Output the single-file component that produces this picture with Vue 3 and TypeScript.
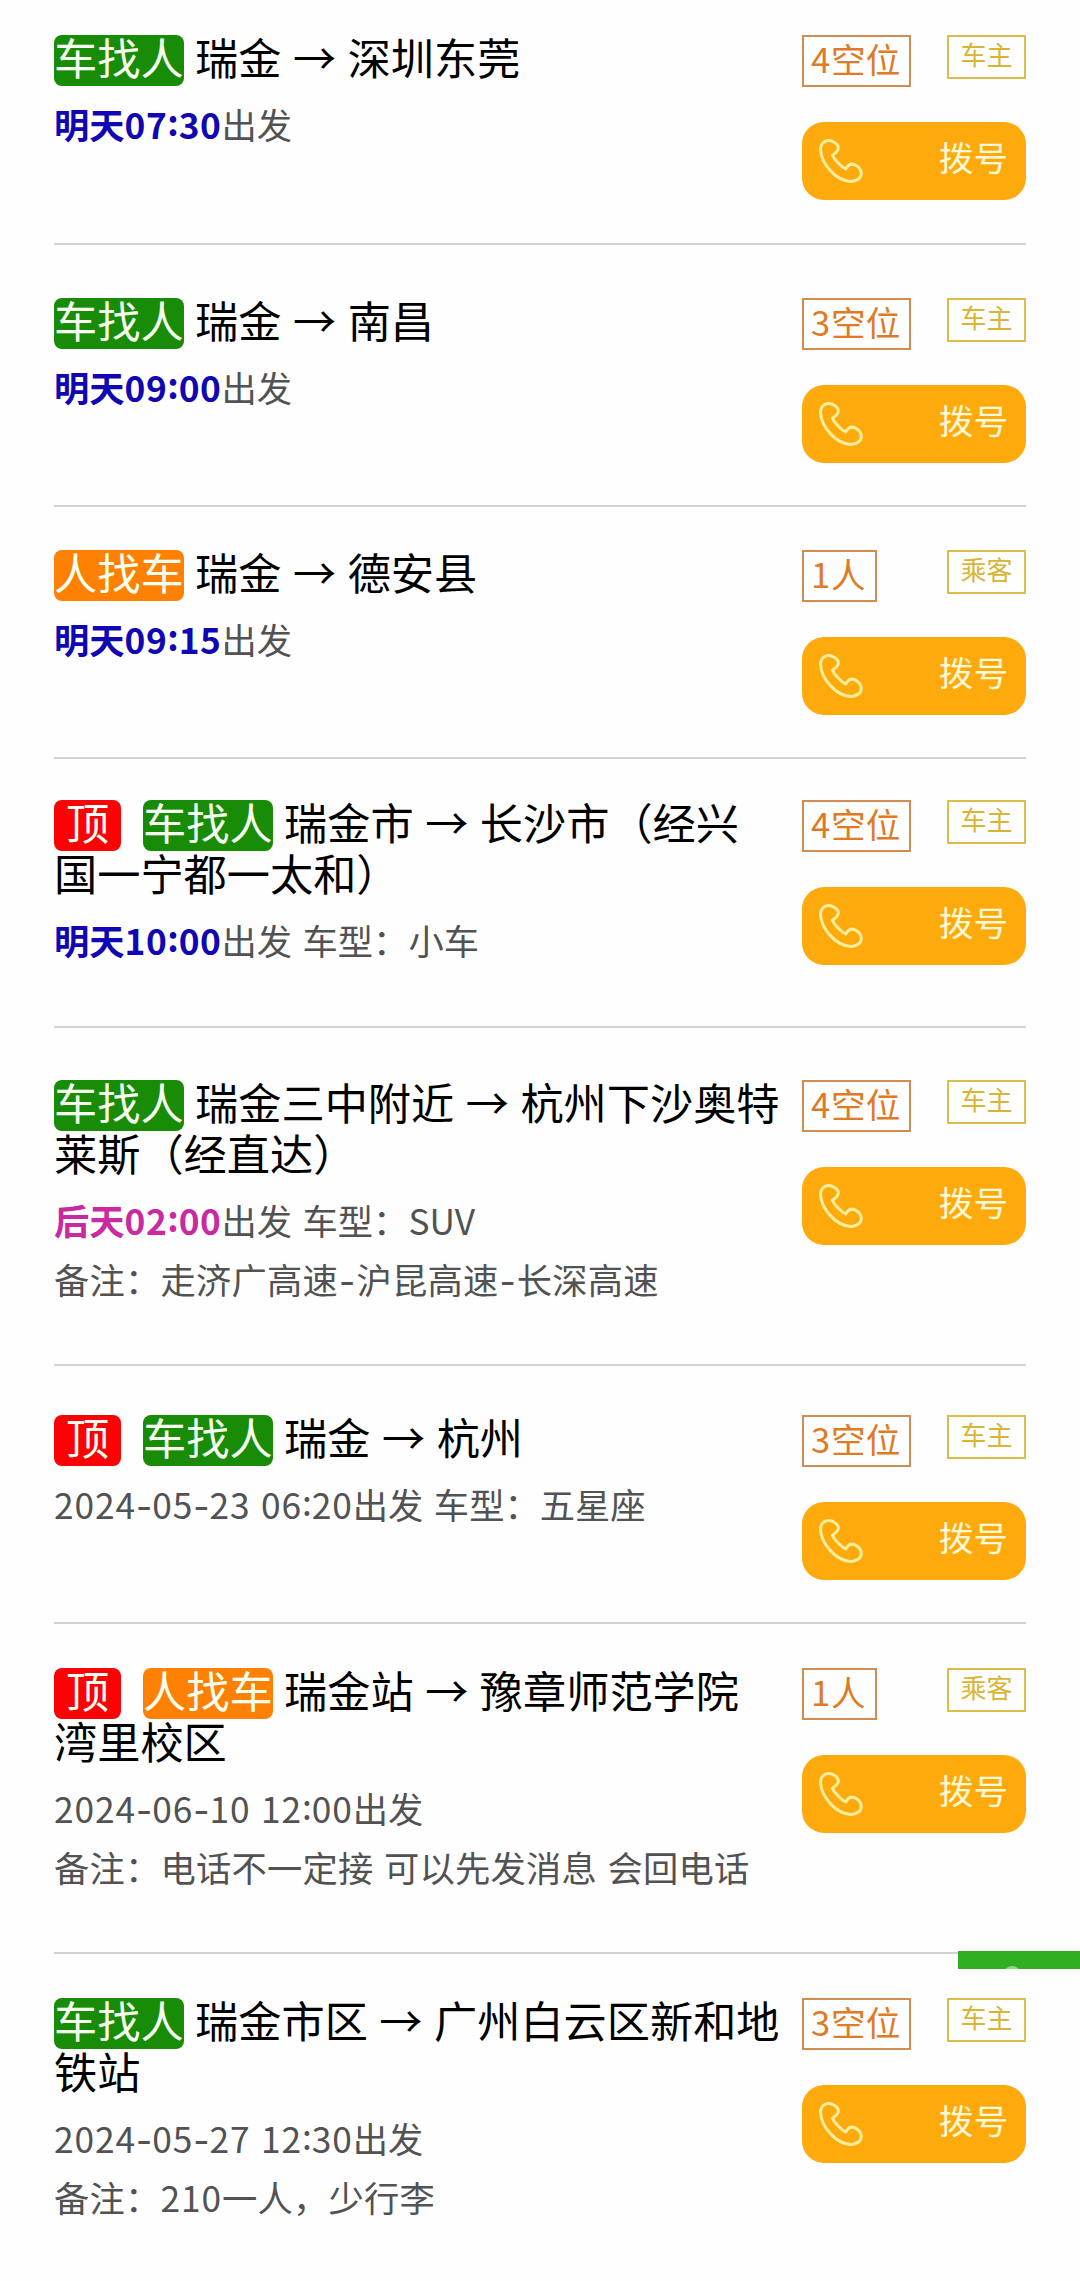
<script setup lang="ts">
type Kind = 'car' | 'rider'

interface Trip {
  kind: Kind
  pinned?: boolean
  lines: string[]
  day?: string
  dayTone?: 'blue' | 'pink'
  meta: string
  note?: string
  seats: string
  gap: number
  height: number
}

interface Piece {
  text: string
  cls: string
}

const trips: Trip[] = [
  { kind: 'car', lines: ['瑞金 → 深圳东莞'], day: '明天07:30', dayTone: 'blue', meta: '出发', seats: '4空位', gap: 35, height: 245 },
  { kind: 'car', lines: ['瑞金 → 南昌'], day: '明天09:00', dayTone: 'blue', meta: '出发', seats: '3空位', gap: 53, height: 262 },
  { kind: 'rider', lines: ['瑞金 → 德安县'], day: '明天09:15', dayTone: 'blue', meta: '出发', seats: '1人', gap: 43, height: 252 },
  { kind: 'car', pinned: true, lines: ['瑞金市 → 长沙市（经兴', '国一宁都一太和）'], day: '明天10:00', dayTone: 'blue', meta: '出发 车型：小车', seats: '4空位', gap: 41, height: 269 },
  { kind: 'car', lines: ['瑞金三中附近 → 杭州下沙奥特', '莱斯（经直达）'], day: '后天02:00', dayTone: 'pink', meta: '出发 车型：SUV', note: '备注：走济广高速-沪昆高速-长深高速', seats: '4空位', gap: 52, height: 338 },
  { kind: 'car', pinned: true, lines: ['瑞金 → 杭州'], meta: '2024-05-23 06:20出发 车型：五星座', seats: '3空位', gap: 49, height: 258 },
  { kind: 'rider', pinned: true, lines: ['瑞金站 → 豫章师范学院', '湾里校区'], meta: '2024-06-10 12:00出发', note: '备注：电话不一定接 可以先发消息 会回电话', seats: '1人', gap: 44, height: 330 },
  { kind: 'car', lines: ['瑞金市区 → 广州白云区新和地', '铁站'], meta: '2024-05-27 12:30出发', note: '备注：210一人，少行李', seats: '3空位', gap: 44, height: 327 },
]

const kindLabel: Record<Kind, string> = { car: '车找人', rider: '人找车' }
const roleLabel: Record<Kind, string> = { car: '车主', rider: '乘客' }

/* Splits a line so digits, dashes and colons can be spaced on their own. */
function pieces(source: string): Piece[] {
  const parts = source.match(/[0-9]+|-|:| |[^0-9\-: ]+/g) ?? []
  return parts.map((text) => {
    if (/^[0-9]/.test(text)) return { text, cls: 'num' }
    if (text === '-') return { text, cls: 'dash' }
    if (text === ':') return { text, cls: 'colon' }
    if (text === ' ') return { text, cls: 'gap' }
    return { text, cls: '' }
  })
}
</script>

<template>
  <main class="list">
    <article
      v-for="(t, i) in trips"
      :key="i"
      class="trip"
      :style="{ height: t.height + 'px', paddingTop: t.gap + 'px' }"
    >
      <div class="info">
        <h2 class="title">
          <span v-if="t.pinned" class="badge pin">顶</span><span class="badge" :class="t.kind">{{ kindLabel[t.kind] }}</span><template v-for="(line, n) in t.lines" :key="n"><br v-if="n > 0"><span v-for="(p, k) in pieces(line)" :key="k" :class="p.cls">{{ p.text }}</span></template>
        </h2>
        <p class="row"><b v-if="t.day" :class="t.dayTone"><span v-for="(p, k) in pieces(t.day)" :key="k" :class="p.cls">{{ p.text }}</span></b><span v-for="(p, k) in pieces(t.meta)" :key="k" :class="p.cls">{{ p.text }}</span></p>
        <p v-if="t.note" class="row note"><span v-for="(p, k) in pieces(t.note)" :key="k" :class="p.cls">{{ p.text }}</span></p>
      </div>
      <aside class="side">
        <div class="tags">
          <span class="seats"><span v-for="(p, k) in pieces(t.seats)" :key="k" :class="p.cls">{{ p.text }}</span></span>
          <span class="role">{{ roleLabel[t.kind] }}</span>
        </div>
        <button class="call" type="button">
          <svg class="phone" viewBox="0 0 44 44" fill="none" stroke="currentColor" stroke-width="3" stroke-linejoin="round" stroke-linecap="round">
            <path d="M9 1.6C4.300 1.900 1.300 5.700 1.500 10.500C2.300 25.500 17.500 41.800 31.500 42.400C37.500 42.600 42.100 39.300 42.300 34.600C42.400 30.600 39.300 27.400 35.500 25.700C31.500 24 28.600 26.700 26.800 30C22.300 28 15.800 21.200 13.400 16.300C16.300 14.500 19.700 12.200 19.300 8.300C18.900 4.700 13.400 1.300 9 1.600Z" />
          </svg>
          <span>拨号</span>
        </button>
      </aside>
    </article>
    <div class="floating"><i></i></div>
  </main>
</template>

<style>
body {
  margin: 0;
  background: #fefefe;
}
</style>

<style scoped>
.list {
  position: relative;
  width: 1080px;
  height: 2281px;
  overflow: hidden;
  padding: 0 54px;
  box-sizing: border-box;
  font-family: "Noto Sans CJK SC", sans-serif;
  color: #000;
}
.trip {
  display: flex;
  justify-content: space-between;
  box-sizing: border-box;
  border-bottom: 2px solid #d2d2d2;
}
.trip:nth-child(8) {
  border-bottom: 0;
}
.info {
  flex: none;
  width: 740px;
  white-space: nowrap;
}
.title {
  margin: -4px 0 12px;
  font-size: 43.200px;
  font-weight: 400;
  line-height: 51px;
}
.title .gap {
  display: inline-block;
  width: 11.500px;
  height: 20px;
}
.badge {
  display: inline-block;
  box-sizing: border-box;
  height: 51px;
  line-height: 43px;
  margin: 0 11.500px -4px 0;
  border-radius: 8px;
  color: #f6fff0;
}
.car {
  background: #188c06;
}
.rider {
  background: #ff8103;
}
.pin {
  width: 67px;
  margin-right: 22px;
  text-align: center;
  background: #fb0204;
}
.row {
  height: 59px;
  margin: 0;
  font-size: 35.300px;
  line-height: 59px;
  color: #525252;
}
.note {
  letter-spacing: 0.200px;
}
.row .gap {
  display: inline-block;
  width: 10.500px;
}
.row b {
  font-weight: 700;
}
.blue {
  color: #1006b4;
}
.pink {
  color: #c92aa2;
}
.num {
  letter-spacing: 0.900px;
}
b .num {
  letter-spacing: 0.500px;
}
.dash {
  font-family: Inter, sans-serif;
  line-height: 1;
}
.note .dash {
  padding: 0 1px;
}
.colon {
  position: relative;
  top: -3px;
}
.side {
  flex: none;
  width: 224px;
}
.tags {
  display: flex;
  justify-content: space-between;
  align-items: flex-start;
  height: 87px;
}
.seats {
  box-sizing: border-box;
  height: 52px;
  padding: 0 9px 0 7px;
  border: 2px solid #d08c52;
  font-size: 34.600px;
  line-height: 42px;
  color: #df7a26;
}
.role {
  box-sizing: border-box;
  width: 79px;
  height: 44px;
  border: 2px solid #dcbc4a;
  font-size: 26px;
  line-height: 34px;
  text-align: center;
  color: #d9b536;
}
.call {
  display: flex;
  justify-content: space-between;
  align-items: flex-start;
  width: 224px;
  height: 78px;
  margin: 0;
  padding: 17px 18px 0 17px;
  box-sizing: border-box;
  border: 0;
  border-radius: 22px;
  background: #ffaa0c;
  font: 34.600px/34px "Noto Sans CJK SC", sans-serif;
  color: #fff9d8;
}
.phone {
  width: 44px;
  height: 44px;
  color: #ffee9c;
}
.floating {
  position: absolute;
  right: 0;
  top: 1951px;
  width: 122px;
  height: 18px;
  overflow: hidden;
  background: #30af20;
}
.floating i {
  position: absolute;
  left: 45px;
  top: 15px;
  width: 18px;
  height: 18px;
  border-radius: 50%;
  background: #8fd588;
}
</style>
